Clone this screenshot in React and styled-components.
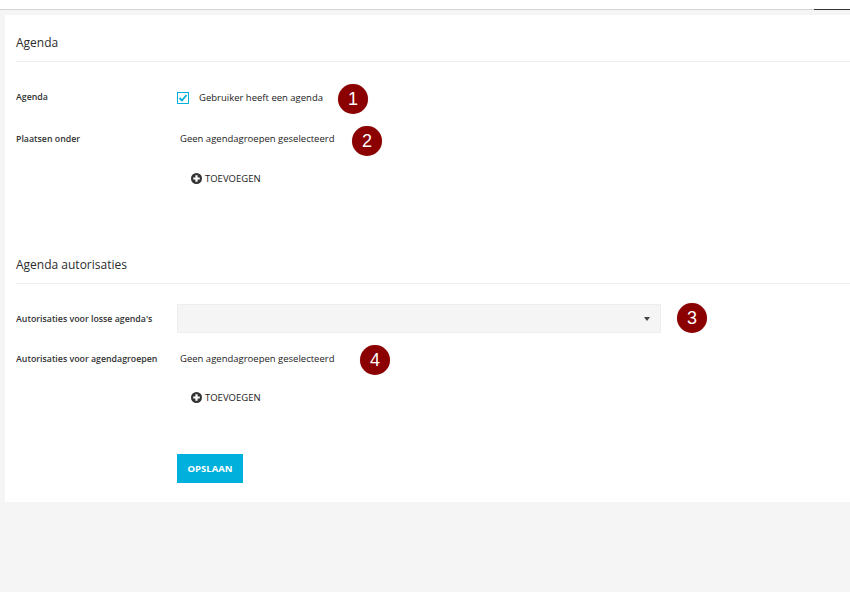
import React from "react";
import styled, { createGlobalStyle } from "styled-components";

const Global = createGlobalStyle`
  html, body { margin: 0; padding: 0; background: #f5f5f5; }
  body { font-family: "Open Sans", "Liberation Sans", sans-serif; color: #333; overflow: hidden; }
`;
const Page = styled.div`
  position: relative; width: 850px; height: 592px; background: #f5f5f5; overflow: hidden;
`;
const TopBar = styled.header`
  height: 9px; background: #fff; border-bottom: 1px solid #d4d4d4;
  display: flex; justify-content: flex-end;
`;
const ActiveTab = styled.div`
  width: 36px; height: 1px; margin-top: 9px; background: #333;
`;
const Panel = styled.main`
  margin: 5px 0 0 5px; height: 487px; background: #fff; padding: 0 0 0 11px; box-sizing: border-box;
`;
const SectionHead = styled.h2`
  margin: 0; height: ${p => p.$h}px; box-sizing: border-box; padding-top: ${p => p.$pt}px;
  font-size: 12px; line-height: 18px; font-weight: 400; color: #2c2c2c;
  border-bottom: 1px solid #eee;
`;
const Row = styled.div`
  display: grid; grid-template-columns: 161px 1fr; align-items: start;
  height: ${p => p.$h}px; padding-top: ${p => p.$pt}px; box-sizing: border-box;
`;
const Label = styled.label`
  font-size: 8.8px; line-height: 14px; font-weight: 600; color: #333; white-space: nowrap;
  padding-top: ${p => p.$pt || 0}px;
`;
const CheckLine = styled.div`
  display: flex; align-items: center; gap: 10px; font-size: 9.5px; line-height: 14px; color: #222; padding-top: 1px;
`;
const CheckBox = styled.span`
  width: 10px; height: 10px; border: 1px solid #00b0dc; display: flex; align-items: center; justify-content: center;
`;
const Empty = styled.div`
  font-size: 9.5px; line-height: 14px; color: #222; padding-left: 3px;
`;
const AddRow = styled.div`
  display: flex; align-items: center; gap: 3px; padding-left: 175px; height: 14px;
  font-size: 9.5px; line-height: 14px; color: #222; margin-top: ${p => p.$mt}px;
  svg { margin-top: -1px; }
`;
const Select = styled.div`
  width: 484px; height: 29px; box-sizing: border-box; background: #f5f5f5; border: 1px solid #eee;
  display: flex; align-items: center; justify-content: flex-end; padding-right: 10px;
`;
const Caret = styled.span`
  width: 0; height: 0; border-left: 3.5px solid transparent; border-right: 3.5px solid transparent; border-top: 4px solid #444;
`;
const SaveButton = styled.button`
  display: block; margin: 49px 0 0 161px; width: 66px; height: 29px; border: 0; padding: 0;
  background: #00b0dc; color: #fff; font-family: inherit; font-size: 9.5px; font-weight: 700;
`;
const Badge = styled.div`
  position: absolute; left: ${p => p.$x}px; top: ${p => p.$y}px; width: 30px; height: 30px; border-radius: 50%;
  background: #8b0000; color: #fff; display: flex; align-items: center; justify-content: center;
  font-family: "Liberation Sans", sans-serif; font-size: 18px; box-shadow: 0 0 1px #caa;
`;

const Plus = () => (
  <svg width="11" height="11" viewBox="0 0 11 11">
    <circle cx="5.5" cy="5.5" r="5.5" fill="#333" />
    <path d="M5.5 2.2v6.6M2.2 5.5h6.6" stroke="#fff" strokeWidth="2.2" />
  </svg>
);
const Add = ({ mt }) => <AddRow $mt={mt}><Plus />TOEVOEGEN</AddRow>;

export default function App() {
  return (
    <Page>
      <Global />
      <TopBar><ActiveTab /></TopBar>
      <Panel>
        <SectionHead $h={47} $pt={19}>Agenda</SectionHead>
        <Row $h={41} $pt={28}>
          <Label>Agenda</Label>
          <CheckLine>
            <CheckBox>
              <svg width="10" height="10" viewBox="0 0 10 10"><path d="M1.5 5l2.5 2.5L8.5 2" fill="none" stroke="#00b0dc" strokeWidth="1.8" /></svg>
            </CheckBox>
            Gebruiker heeft een agenda
          </CheckLine>
        </Row>
        <Row $h={49} $pt={29}>
          <Label>Plaatsen onder</Label>
          <Empty>Geen agendagroepen geselecteerd</Empty>
        </Row>
        <Add mt={20} />
        <SectionHead $h={98} $pt={70}>Agenda autorisaties</SectionHead>
        <Row $h={49} $pt={20}>
          <Label $pt={8}>Autorisaties voor losse agenda's</Label>
          <Select><Caret /></Select>
        </Row>
        <Row $h={47} $pt={19}>
          <Label>Autorisaties voor agendagroepen</Label>
          <Empty>Geen agendagroepen geselecteerd</Empty>
        </Row>
        <Add mt={11} />
        <SaveButton>OPSLAAN</SaveButton>
      </Panel>
      <Badge $x={338} $y={84}>1</Badge>
      <Badge $x={352} $y={126}>2</Badge>
      <Badge $x={677} $y={303}>3</Badge>
      <Badge $x={360} $y={345}>4</Badge>
    </Page>
  );
}
